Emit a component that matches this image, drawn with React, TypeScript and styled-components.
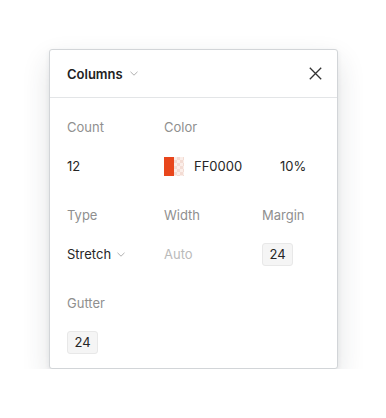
import * as React from 'react';
import styled, { createGlobalStyle } from 'styled-components';

const GlobalStyle = createGlobalStyle`
  html, body {
    margin: 0;
    padding: 0;
    background: #ffffff;
    font-family: Inter, "Noto Sans", "Liberation Sans", sans-serif;
    -webkit-font-smoothing: antialiased;
  }
`;

const Page = styled.div`
  padding: 49px 0 0 49px;
`;

const Panel = styled.div`
  width: 289px;
  height: 320px;
  box-sizing: border-box;
  background: #ffffff;
  border: 1px solid #d2d5d8;
  border-radius: 3px;
  box-shadow: 0 12px 28px rgba(40, 50, 60, 0.14), 0 2px 5px rgba(40, 50, 60, 0.08);
`;

const Header = styled.div`
  display: flex;
  align-items: center;
  justify-content: space-between;
  height: 47px;
  padding: 0 14px 0 17px;
  border-bottom: 1px solid #e3e5e7;
`;

const Title = styled.div`
  display: flex;
  align-items: center;
  gap: 7px;
  font-size: 13px;
  font-weight: 600;
  color: #222222;
`;

const CloseButton = styled.button`
  display: flex;
  align-items: center;
  justify-content: center;
  width: 16px;
  height: 16px;
  padding: 0;
  border: none;
  background: none;
  cursor: pointer;
`;

const Body = styled.div`
  display: grid;
  grid-template-columns: 97px 98px 1fr;
  row-gap: 29px;
  padding: 21px 17px 0 17px;
`;

const Field = styled.div<{ $span?: number }>`
  display: flex;
  flex-direction: column;
  gap: 19px;
  grid-column: span ${(p) => p.$span || 1};
`;

const Label = styled.div`
  font-size: 13px;
  line-height: 16px;
  color: #8f8f8f;
`;

const Value = styled.div<{ $muted?: boolean }>`
  display: flex;
  align-items: center;
  height: 24px;
  font-size: 13px;
  color: ${(p) => (p.$muted ? '#bababa' : '#262626')};
`;

const NumberBox = styled.div`
  display: flex;
  align-items: center;
  justify-content: center;
  width: 31px;
  height: 23px;
  box-sizing: border-box;
  background: #f5f5f5;
  border: 1px solid #e8e8e8;
  border-radius: 3px;
  font-size: 13px;
  color: #262626;
`;

const Swatch = styled.div`
  display: flex;
  width: 20px;
  height: 19px;
  margin-right: 10px;
`;

const SwatchSolid = styled.div`
  width: 10px;
  background: #e8461c;
`;

const SwatchAlpha = styled.div`
  width: 10px;
  background-color: #fbeee9;
  background-image: linear-gradient(45deg, #f3dcd4 25%, transparent 25%, transparent 75%, #f3dcd4 75%),
    linear-gradient(45deg, #f3dcd4 25%, transparent 25%, transparent 75%, #f3dcd4 75%);
  background-size: 6px 6px;
  background-position: 0 0, 3px 3px;
`;

const Hex = styled.span`
  width: 86px;
`;

const Dropdown = styled.div`
  display: flex;
  align-items: center;
  gap: 6px;
`;

const Chevron = () => (
  <svg width="8" height="5" viewBox="0 0 8 5" fill="none">
    <path d="M0.5 0.8 L4 4.2 L7.5 0.8" stroke="#b0b0b0" strokeWidth="1" />
  </svg>
);

const CloseIcon = () => (
  <svg width="13" height="13" viewBox="0 0 13 13" fill="none">
    <path d="M0.8 0.8 L12.2 12.2 M12.2 0.8 L0.8 12.2" stroke="#333333" strokeWidth="1.3" />
  </svg>
);

export default function App() {
  return (
    <Page>
      <GlobalStyle />
      <Panel>
        <Header>
          <Title>
            Columns
            <Chevron />
          </Title>
          <CloseButton aria-label="Close">
            <CloseIcon />
          </CloseButton>
        </Header>
        <Body>
          <Field>
            <Label>Count</Label>
            <Value>12</Value>
          </Field>
          <Field $span={2}>
            <Label>Color</Label>
            <Value>
              <Swatch>
                <SwatchSolid />
                <SwatchAlpha />
              </Swatch>
              <Hex>FF0000</Hex>
              <span>10%</span>
            </Value>
          </Field>
          <Field>
            <Label>Type</Label>
            <Value>
              <Dropdown>
                Stretch
                <Chevron />
              </Dropdown>
            </Value>
          </Field>
          <Field>
            <Label>Width</Label>
            <Value $muted>Auto</Value>
          </Field>
          <Field>
            <Label>Margin</Label>
            <Value>
              <NumberBox>24</NumberBox>
            </Value>
          </Field>
          <Field>
            <Label>Gutter</Label>
            <Value>
              <NumberBox>24</NumberBox>
            </Value>
          </Field>
        </Body>
      </Panel>
    </Page>
  );
}
